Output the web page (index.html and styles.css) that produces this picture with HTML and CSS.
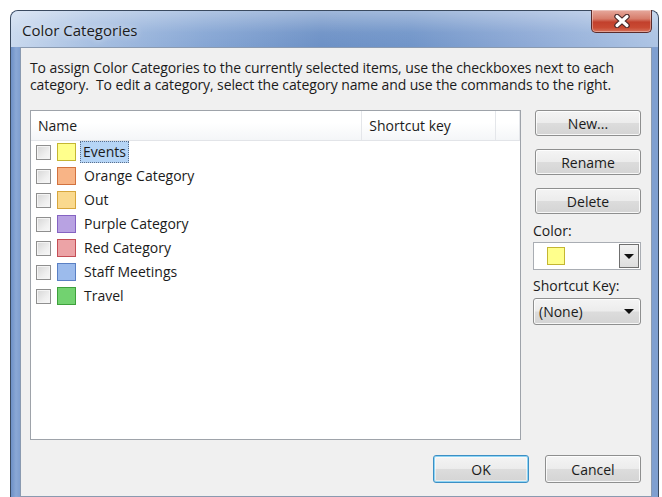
FILE: index.html
```html
<!DOCTYPE html>
<html lang="en">
<head>
<meta charset="utf-8">
<title>Color Categories</title>
<link rel="stylesheet" href="styles.css">
</head>
<body>
<div class="window">
  <div class="titlebar">
    <span class="title">Color Categories</span>
    <button class="close" aria-label="Close">
      <svg width="20" height="14" viewBox="0 0 20 14">
        <path d="M5 2.5 L15 11.5 M15 2.5 L5 11.5" stroke="#4a2a2a" stroke-width="5.5" stroke-linecap="round"/>
        <path d="M5 2.5 L15 11.5 M15 2.5 L5 11.5" stroke="#ffffff" stroke-width="3.2" stroke-linecap="round"/>
      </svg>
    </button>
  </div>
  <div class="client">
    <p class="intro">To assign Color Categories to the currently selected items, use the checkboxes next to each category.&nbsp; To edit a category, select the category name and use the commands to the right.</p>
    <div class="main">
      <div class="listbox">
        <div class="list-head">
          <div class="col col-name">Name</div>
          <div class="col col-key">Shortcut key</div>
          <div class="col col-rest"></div>
        </div>
        <ul class="rows">
          <li class="row"><span class="check"></span><span class="swatch yellow"></span><span class="label selected">Events</span></li>
          <li class="row"><span class="check"></span><span class="swatch orange"></span><span class="label">Orange Category</span></li>
          <li class="row"><span class="check"></span><span class="swatch gold"></span><span class="label">Out</span></li>
          <li class="row"><span class="check"></span><span class="swatch purple"></span><span class="label">Purple Category</span></li>
          <li class="row"><span class="check"></span><span class="swatch red"></span><span class="label">Red Category</span></li>
          <li class="row"><span class="check"></span><span class="swatch blue"></span><span class="label">Staff Meetings</span></li>
          <li class="row"><span class="check"></span><span class="swatch green"></span><span class="label">Travel</span></li>
        </ul>
      </div>
      <div class="side">
        <button class="btn side-btn">New...</button>
        <button class="btn side-btn">Rename</button>
        <button class="btn side-btn">Delete</button>
        <label class="field-label">Color:</label>
        <div class="color-pick">
          <span class="swatch yellow pick-swatch"></span>
          <span class="pick-arrow"><span class="tri"></span></span>
        </div>
        <label class="field-label key-label">Shortcut Key:</label>
        <div class="btn key-select">
          <span>(None)</span>
          <span class="tri"></span>
        </div>
      </div>
    </div>
    <div class="footer">
      <button class="btn foot-btn default">OK</button>
      <button class="btn foot-btn">Cancel</button>
    </div>
  </div>
</div>
</body>
</html>
```

FILE: styles.css
```css
html, body {
  margin: 0;
  padding: 0;
  background: #ffffff;
  overflow: hidden;
}

body {
  font-family: "Open Sans", "Noto Sans", "Liberation Sans", sans-serif;
  font-size: 14px;
  color: #1b1b1b;
}

/* Window frame */
.window {
  margin: 10px 0 0 10px;
  width: 649px;
  height: 490px;
  box-sizing: border-box;
  border: 1px solid #3a4a60;
  border-bottom: none;
  border-radius: 8px 8px 0 0;
  background: linear-gradient(90deg, #6d90c6 0px, #8aa8d6 5px, #7f9fd0 9px, #7f9fd0 100%);
  display: flex;
  flex-direction: column;
  padding: 0 6px 3px 9px;
}

.titlebar {
  height: 36px;
  margin: 0 -6px 0 -9px;
  padding: 0 6px 0 11px;
  border-radius: 7px 7px 0 0;
  background:
    linear-gradient(180deg, rgba(255,255,255,0.35) 0%, rgba(255,255,255,0.05) 60%, rgba(255,255,255,0) 100%),
    linear-gradient(90deg, #c9d9ee 0%, #a8c0e2 12%, #86a6d4 30%, #6d91c6 48%, #7195c9 62%, #8eaad6 80%, #adc4e4 100%);
  display: flex;
  align-items: flex-start;
  justify-content: space-between;
}

.title {
  font-size: 15px;
  margin-top: 9px;
  color: #1c1c1c;
  text-shadow: 0 0 6px rgba(255,255,255,0.8);
}

.close {
  width: 61px;
  height: 23px;
  margin-top: -1px;
  padding: 0;
  border: 1px solid #5a2b2b;
  border-top: none;
  border-radius: 0 0 5px 5px;
  background: linear-gradient(180deg, #e6a99d 0%, #d77d6b 40%, #c2402c 55%, #c94a33 80%, #d6735d 100%);
  box-shadow: inset 0 0 0 1px rgba(255,255,255,0.35);
  display: flex;
  align-items: center;
  justify-content: center;
}

/* Client area */
.client {
  flex: 1;
  background: #f0f0f0;
  border: 1px solid #8a9ab0;
  display: flex;
  flex-direction: column;
  padding: 0 10px 0 9px;
}

.intro {
  margin: 11px 0 0 0;
  line-height: 17px;
  height: 34px;
  letter-spacing: -0.1px;
}

.main {
  display: flex;
  gap: 12px;
  margin-top: 17px;
}

.listbox {
  width: 489px;
  height: 328px;
  background: #ffffff;
  border: 1px solid #9ea3aa;
}

.list-head {
  display: flex;
  height: 29px;
  border-bottom: 1px solid #e2e4e8;
  background: linear-gradient(180deg, #ffffff 0%, #ffffff 40%, #f4f6f8 100%);
}

.col {
  display: flex;
  align-items: center;
  padding-left: 7px;
  border-right: 1px solid #e4e6ea;
}

.col-name { width: 324px; }
.col-key { width: 126px; }
.col-rest { width: 16px; }

.rows {
  list-style: none;
  margin: -1px 0 0 0;
  padding: 0;
}

.row {
  height: 24px;
  display: flex;
  align-items: center;
  padding-left: 5px;
}

.check {
  width: 13px;
  height: 13px;
  border: 1px solid #8f8f8f;
  background: linear-gradient(135deg, #d6d6d6 0%, #eeeeee 60%, #f8f8f8 100%);
  box-shadow: inset 0 0 0 1px #f4f4f4;
}

.swatch {
  width: 17px;
  height: 16px;
  margin-left: 6px;
  border: 1px solid;
}

.yellow { background: #ffff8c; border-color: #c4b632; }
.orange { background: #f8b486; border-color: #d2723e; }
.gold   { background: #fad98e; border-color: #d7a63c; }
.purple { background: #b8a2e2; border-color: #8563c2; }
.red    { background: #eca3a6; border-color: #c44e56; }
.blue   { background: #9cbbec; border-color: #5a80c4; }
.green  { background: #72d270; border-color: #3ea03c; }

.label {
  margin-left: 5px;
  padding: 1px 2px;
  line-height: 18px;
  border: 1px dotted transparent;
}

.label.selected {
  background: #b6d5f6;
  border-color: #5a6f8c;
  margin-left: 4px;
}

/* Right column */
.side {
  width: 108px;
  display: flex;
  flex-direction: column;
}

.btn {
  font: inherit;
  color: #1b1b1b;
  box-sizing: border-box;
  border: 1px solid #8e8f8f;
  border-radius: 3px;
  background: linear-gradient(180deg, #f4f4f4 0%, #ececec 48%, #dcdcdc 52%, #d4d4d4 100%);
  box-shadow: inset 0 0 0 1px rgba(255,255,255,0.8);
  padding: 0;
}

.side-btn {
  height: 26px;
  width: 106px;
  margin: 0 0 13px 2px;
}

.side-btn:nth-child(3) { margin-bottom: 7px; }

.field-label {
  line-height: 19px;
}

.color-pick {
  margin-top: 2px;
  width: 108px;
  height: 28px;
  box-sizing: border-box;
  background: #ffffff;
  border: 1px solid #a9adb3;
  display: flex;
  align-items: center;
  justify-content: space-between;
}

.pick-swatch {
  margin-left: 13px;
  width: 16px;
  height: 16px;
}

.pick-arrow {
  width: 20px;
  height: 24px;
  margin-right: 1px;
  box-sizing: border-box;
  border: 1px solid #6f6f6f;
  background: linear-gradient(180deg, #f2f2f2, #dedede);
  display: flex;
  align-items: center;
  justify-content: center;
}

.tri {
  width: 0;
  height: 0;
  border-left: 5px solid transparent;
  border-right: 5px solid transparent;
  border-top: 5px solid #111111;
}

.key-label {
  margin-top: 6px;
}

.key-select {
  margin-top: 3px;
  width: 108px;
  height: 27px;
  display: flex;
  align-items: center;
  justify-content: space-between;
  padding: 0 6px 0 5px;
}

/* Bottom buttons */
.footer {
  display: flex;
  justify-content: flex-end;
  gap: 16px;
  margin-top: 15px;
}

.foot-btn {
  width: 96px;
  height: 28px;
}

.foot-btn.default {
  border-color: #3c8fc4;
  box-shadow: inset 0 0 0 1px #8ed4f4, inset 0 0 0 2px rgba(255,255,255,0.5);
}
```
